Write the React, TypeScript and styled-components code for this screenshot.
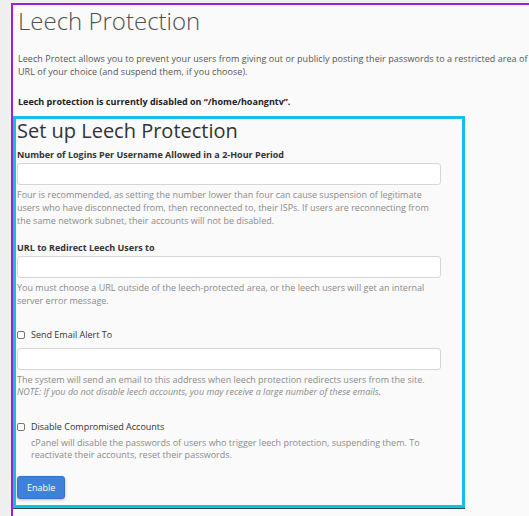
import React from "react";
import styled, { createGlobalStyle } from "styled-components";

const Global = createGlobalStyle`
  html, body { margin: 0; padding: 0; overflow: hidden; }
  body {
    background: #efefef;
    font-family: "Open Sans", "Noto Sans", "Liberation Sans", sans-serif;
    width: 529px;
    height: 516px;
  }
`;

const Page = styled.div`
  padding: 3px 0 0 11px;
  height: 516px;
  box-sizing: border-box;
  overflow: hidden;
`;

const Frame = styled.div`
  width: 600px;
  height: 560px;
  border: 2px solid #a11fd2;
  border-right: none;
  border-bottom: none;
  background: #fafafa;
  padding: 0 0 0 5px;
  box-sizing: border-box;
`;

const Title = styled.h1`
  margin: 1px 0 0 0;
  font-size: 24px;
  font-weight: 300;
  line-height: 30px;
  color: #505050;
`;

const Intro = styled.p`
  margin: 16px 0 0 0;
  font-size: 9px;
  line-height: 13px;
  color: #555;
  white-space: nowrap;
  letter-spacing: 0.05px;
`;

const Status = styled.p`
  margin: 17px 0 0 0;
  font-size: 9px;
  line-height: 13px;
  font-weight: 700;
  color: #222;
`;

const Panel = styled.section`
  margin: 8px 0 0 -5px;
  width: 452px;
  height: 392px;
  box-sizing: border-box;
  border: 3px solid #17bfe6;
  box-shadow: 0 1px 0 #2b4b55;
  padding: 0 0 0 1px;
  display: flex;
  flex-direction: column;
`;

const Heading = styled.h2`
  margin: 0;
  font-size: 20px;
  font-weight: 400;
  line-height: 24px;
  color: #333;
`;

const Field = styled.div<{ $top?: number }>`
  margin-top: ${(p) => p.$top ?? 0}px;
  display: flex;
  flex-direction: column;
`;

const Label = styled.label`
  font-size: 9px;
  line-height: 13px;
  font-weight: 700;
  color: #333;
`;

const CheckRow = styled.label`
  display: flex;
  align-items: center;
  gap: 6px;
  font-size: 9px;
  line-height: 13px;
  color: #333;
  margin-bottom: 5px;
`;

const Box = styled.span`
  width: 8px;
  height: 8px;
  box-sizing: border-box;
  border: 1px solid #767676;
  border-radius: 2px;
  background: #fff;
  flex: none;
`;

const Input = styled.input`
  margin-top: 2px;
  width: 424px;
  height: 22px;
  box-sizing: border-box;
  border: 1px solid #d6d6d6;
  border-radius: 3px;
  background: #fff;
  padding: 0 6px;
  font: inherit;
  outline: none;
`;

const Help = styled.p<{ $indent?: boolean }>`
  margin: ${(p) => (p.$indent ? -1 : 3)}px 0 0 ${(p) => (p.$indent ? 14 : 0)}px;
  width: ${(p) => (p.$indent ? 410 : 424)}px;
  font-size: 9px;
  line-height: ${(p) => (p.$indent ? 12 : 13)}px;
  color: #8a8a8a;
`;

const Note = styled.em`
  display: block;
  font-style: italic;
  margin-top: -1px;
`;

const Button = styled.button`
  margin-top: 15px;
  align-self: flex-start;
  height: 23px;
  padding: 0 9px;
  border: 1px solid #3573c8;
  border-radius: 3px;
  background: #3f80d9;
  color: #fff;
  font-family: inherit;
  font-size: 9px;
  box-shadow: 0 1px 3px rgba(0, 0, 0, 0.25);
`;

export default function App() {
  return (
    <>
      <Global />
      <Page>
        <Frame>
          <Title>Leech Protection</Title>
          <Intro>
            Leech Protect allows you to prevent your users from giving out or publicly posting their passwords to a restricted area of
            <br />
            URL of your choice (and suspend them, if you choose).
          </Intro>
          <Status>Leech protection is currently disabled on “/home/hoangntv”.</Status>
          <Panel>
            <Heading>Set up Leech Protection</Heading>
            <Field $top={5}>
              <Label>Number of Logins Per Username Allowed in a 2-Hour Period</Label>
              <Input type="text" />
              <Help>
                Four is recommended, as setting the number lower than four can cause suspension of legitimate users who have disconnected from, then reconnected to, their ISPs. If users are reconnecting from the same network subnet, their accounts will not be disabled.
              </Help>
            </Field>
            <Field $top={14}>
              <Label>URL to Redirect Leech Users to</Label>
              <Input type="text" />
              <Help>
                You must choose a URL outside of the leech-protected area, or the leech users will get an internal server error message.
              </Help>
            </Field>
            <Field $top={21}>
              <CheckRow>
                <Box />
                Send Email Alert To
              </CheckRow>
              <Input type="text" />
              <Help>
                The system will send an email to this address when leech protection redirects users from the site.
                <Note>NOTE: If you do not disable leech accounts, you may receive a large number of these emails.</Note>
              </Help>
            </Field>
            <Field $top={22}>
              <CheckRow>
                <Box />
                Disable Compromised Accounts
              </CheckRow>
              <Help $indent>
                cPanel will disable the passwords of users who trigger leech protection, suspending them. To reactivate their accounts, reset their passwords.
              </Help>
            </Field>
            <Button>Enable</Button>
          </Panel>
        </Frame>
      </Page>
    </>
  );
}
